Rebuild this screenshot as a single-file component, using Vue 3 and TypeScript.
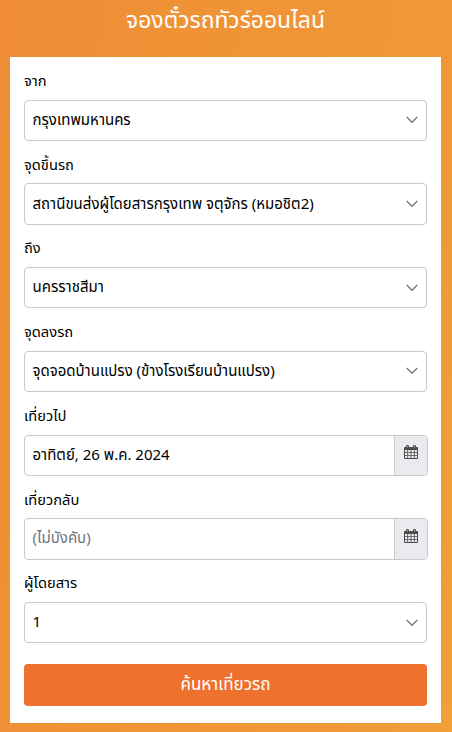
<script setup lang="ts">
interface Field {
  id: string
  label: string
  value: string
  kind: 'select' | 'date'
  placeholder?: boolean
}

const fields: Field[] = [
  { id: 'from', label: 'จาก', value: 'กรุงเทพมหานคร', kind: 'select' },
  { id: 'pickup', label: 'จุดขึ้นรถ', value: 'สถานีขนส่งผู้โดยสารกรุงเทพ จตุจักร (หมอชิต2)', kind: 'select' },
  { id: 'to', label: 'ถึง', value: 'นครราชสีมา', kind: 'select' },
  { id: 'dropoff', label: 'จุดลงรถ', value: 'จุดจอดบ้านแปรง (ข้างโรงเรียนบ้านแปรง)', kind: 'select' },
  { id: 'depart', label: 'เที่ยวไป', value: 'อาทิตย์, 26 พ.ค. 2024', kind: 'date' },
  { id: 'return', label: 'เที่ยวกลับ', value: '(ไม่บังคับ)', kind: 'date', placeholder: true },
  { id: 'passengers', label: 'ผู้โดยสาร', value: '1', kind: 'select' },
]
</script>

<template>
  <main class="page">
    <h1 class="title">จองตั๋วรถทัวร์ออนไลน์</h1>
    <form class="card" @submit.prevent>
      <div v-for="f in fields" :key="f.id" class="field">
        <div class="label">{{ f.label }}</div>
        <div class="control" :class="f.kind">
          <span class="value" :class="{ placeholder: f.placeholder }">{{ f.value }}</span>
          <svg v-if="f.kind === 'select'" class="chevron" viewBox="0 0 12 8" width="12" height="8">
            <path d="M.7 1 6 6.3 11.3 1" fill="none" stroke="#777" stroke-width="1.300" />
          </svg>
          <span v-else class="addon">
            <svg viewBox="0 0 14 14" width="14" height="14">
              <path fill="#4b4c4c" fill-rule="evenodd" d="M0 3Q0 2 1 2h1V1.200Q2 0 3.500 0T5 1.200V2h4V1.200Q9 0 10.500 0T12 1.200V2h1q1 0 1 1v10q0 1-1 1H1q-1 0-1-1ZM3.200 1v1.500h.6V1ZM10.200 1v1.500h.6V1ZM1 5v2.200h2.300V5ZM4.100 5v2.200h2.500V5ZM7.400 5v2.200H9.900V5ZM10.700 5v2.200H13V5ZM1 8v2.200h2.300V8ZM4.100 8v2.200h2.500V8ZM7.400 8v2.200H9.900V8ZM10.700 8v2.200H13V8ZM1 11v2h2.300v-2ZM4.100 11v2h2.500v-2ZM7.400 11v2H9.900v-2ZM10.700 11v2H13v-2Z" />
            </svg>
          </span>
        </div>
      </div>
      <button class="submit" type="submit">ค้นหาเที่ยวรถ</button>
    </form>
  </main>
</template>

<style>
body {
  margin: 0;
}
</style>

<style scoped>
.page {
  box-sizing: border-box;
  height: 732px;
  padding: 0 11px 0 10px;
  overflow: hidden;
  background: linear-gradient(100deg, #ef8c35 0%, #ef9436 40%, #f09838 80%, #f19f38 100%);
  font-family: "Noto Sans Thai", "Noto Sans", sans-serif;
  color: #000;
}
.title {
  height: 57px;
  margin: 0;
  padding-top: 2px;
  box-sizing: border-box;
  font-size: 22.900px;
  line-height: 38px;
  font-weight: 400;
  text-align: center;
  color: #fff;
}
.card {
  box-sizing: border-box;
  height: 666px;
  padding: 12px 14px 0;
  background: #fff;
}
.field {
  height: 83.720px;
}
.label {
  box-sizing: border-box;
  height: 30.700px;
  padding-top: 1px;
  font-size: 14.700px;
  line-height: 24px;
  font-weight: 400;
}
.control {
  box-sizing: border-box;
  display: flex;
  align-items: center;
  width: 403px;
  height: 41.300px;
  padding: 0 8px 0 7.500px;
  border: 1px solid #c8c9cc;
  border-radius: 4px;
  font-size: 15px;
  line-height: 24px;
  font-weight: 400;
  white-space: nowrap;
}
.date {
  width: 404px;
  padding-right: 0;
}
.value {
  flex: 1;
  padding-top: 1px;
}
.placeholder {
  color: #6c757d;
}
.addon {
  box-sizing: border-box;
  align-self: stretch;
  display: flex;
  justify-content: center;
  width: 33px;
  padding-top: 9.500px;
  border-left: 1px solid #c8c9cc;
  border-radius: 0 3px 3px 0;
  background: #e9ebef;
}
.submit {
  display: block;
  width: 403px;
  height: 42px;
  margin: 9px 0 0;
  padding: 0;
  border: 0;
  border-radius: 4px;
  background: #ee712e;
  color: #fff;
  font-family: inherit;
  font-size: 17px;
  line-height: 40px;
  font-weight: 400;
}
</style>
